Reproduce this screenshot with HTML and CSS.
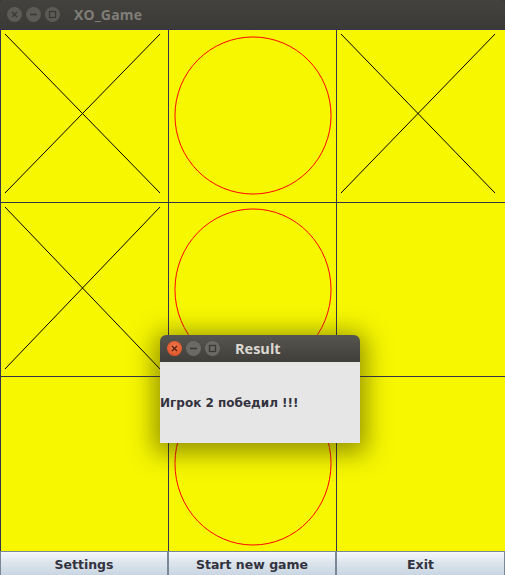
FILE: index.html
```html
<!DOCTYPE html>
<html>
<head>
<meta charset="utf-8">
<link rel="stylesheet" href="styles.css">
</head>
<body>
<div class="window">
  <div class="titlebar">
    <div class="wbtns">
      <span class="wbtn"><svg width="15" height="15" viewBox="0 0 15 15"><path d="M5 5 L10 10 M10 5 L5 10" stroke="#3a3935" stroke-width="1.4"/></svg></span>
      <span class="wbtn"><svg width="15" height="15" viewBox="0 0 15 15"><path d="M4 7.5 H11" stroke="#3a3935" stroke-width="1.6"/></svg></span>
      <span class="wbtn"><svg width="15" height="15" viewBox="0 0 15 15"><rect x="4.5" y="4.5" width="6" height="6" fill="none" stroke="#3a3935" stroke-width="1.3"/></svg></span>
    </div>
    <span class="title">XO_Game</span>
  </div>
  <div class="board">
    <div class="cell"><svg class="mark" viewBox="0 0 168 173"><path d="M4 4 L160 164 M160 4 L4 164" stroke="#000" stroke-width="1" fill="none"/></svg></div>
    <div class="cell"><svg class="mark" viewBox="0 0 168 173"><ellipse cx="84.5" cy="86" rx="78.5" ry="79" stroke="#f00" stroke-width="1" fill="none"/></svg></div>
    <div class="cell"><svg class="mark" viewBox="0 0 169 173"><path d="M4 4 L159 164 M159 4 L4 164" stroke="#000" stroke-width="1" fill="none"/></svg></div>
    <div class="cell"><svg class="mark" viewBox="0 0 168 174"><path d="M4 4 L160 167 M160 4 L4 167" stroke="#000" stroke-width="1" fill="none"/></svg></div>
    <div class="cell"><svg class="mark" viewBox="0 0 168 174"><ellipse cx="84.5" cy="87" rx="78.5" ry="81" stroke="#f00" stroke-width="1" fill="none"/></svg></div>
    <div class="cell"></div>
    <div class="cell"></div>
    <div class="cell"><svg class="mark" viewBox="0 0 168 175"><ellipse cx="84.5" cy="87" rx="78.5" ry="82" stroke="#f00" stroke-width="1" fill="none"/></svg></div>
    <div class="cell"></div>
  </div>
  <div class="buttons">
    <button class="btn">Settings</button>
    <button class="btn">Start new game</button>
    <button class="btn">Exit</button>
  </div>
</div>
<div class="dialog">
  <div class="dtitle">
    <div class="wbtns">
      <span class="wbtn close"><svg width="15" height="15" viewBox="0 0 15 15"><path d="M5 5 L10 10 M10 5 L5 10" stroke="#5a2010" stroke-width="1.4"/></svg></span>
      <span class="wbtn dark"><svg width="15" height="15" viewBox="0 0 15 15"><path d="M4 7.5 H11" stroke="#3a3935" stroke-width="1.6"/></svg></span>
      <span class="wbtn dark"><svg width="15" height="15" viewBox="0 0 15 15"><rect x="4.5" y="4.5" width="6" height="6" fill="none" stroke="#3a3935" stroke-width="1.3"/></svg></span>
    </div>
    <span class="dtext">Result</span>
  </div>
  <div class="dbody">Игрок 2 победил !!!</div>
</div>
</body>
</html>
```

FILE: styles.css
```css
html, body {
  margin: 0;
  padding: 0;
  background: #3c3b37;
}
body {
  width: 505px;
  height: 575px;
  overflow: hidden;
  position: relative;
  font-family: "DejaVu Sans", sans-serif;
}
.window {
  display: flex;
  flex-direction: column;
  width: 505px;
  height: 575px;
}
.titlebar {
  height: 29px;
  background: linear-gradient(#43423e, #3b3a36);
  border-radius: 5px 5px 0 0;
  display: flex;
  align-items: center;
  flex-shrink: 0;
}
.wbtns {
  display: flex;
  gap: 4px;
  margin-left: 7px;
}
.wbtn {
  width: 15px;
  height: 15px;
  border-radius: 50%;
  background: #5c5b56;
  display: flex;
}
.title {
  margin-left: 14px;
  font-family: "Open Sans", "DejaVu Sans", sans-serif;
  font-weight: bold;
  font-size: 14px;
  color: #807e78;
  letter-spacing: 0.2px;
}
.board {
  display: grid;
  grid-template-columns: 168px 168px 169px;
  grid-template-rows: 173px 174px 175px;
  background: #f7f700;
  flex-shrink: 0;
}
.cell {
  border-left: 1px solid #34344a;
  border-top: 1px solid #34344a;
  position: relative;
  overflow: hidden;
}
.mark {
  display: block;
  width: 100%;
  height: 100%;
}
.buttons {
  display: grid;
  grid-template-columns: 168px 168px 169px;
  height: 24px;
  flex-shrink: 0;
}
.btn {
  margin: 0;
  padding: 2px 0 0 0;
  border: 1px solid #7a8796;
  border-bottom: none;
  background: linear-gradient(#f4f7fa, #dde5ec 45%, #c9d6e2);
  font-family: "DejaVu Sans", sans-serif;
  font-weight: bold;
  font-size: 12.5px;
  color: #333340;
  height: 24px;
}
.dialog {
  position: absolute;
  left: 160px;
  top: 335px;
  width: 200px;
  height: 108px;
  box-shadow: 0 4px 24px 6px rgba(50, 50, 0, 0.5);
  border-radius: 6px 6px 0 0;
  display: flex;
  flex-direction: column;
}
.dtitle {
  height: 27px;
  background: linear-gradient(#57554f, #3f3e3a);
  border-radius: 6px 6px 0 0;
  display: flex;
  align-items: center;
}
.dtitle .wbtns {
  margin-left: 7px;
  gap: 4px;
}
.wbtn.close {
  background: radial-gradient(circle at 50% 40%, #f07a4e, #d9481c);
}
.wbtn.dark {
  background: #6b6a64;
}
.dtext {
  margin-left: 15px;
  font-family: "Open Sans", "DejaVu Sans", sans-serif;
  font-weight: bold;
  font-size: 14.5px;
  color: #dcd9d2;
}
.dbody {
  flex: 1;
  background: #e6e6e6;
  font-weight: bold;
  font-size: 12px;
  color: #333340;
  display: flex;
  align-items: center;
}
```
